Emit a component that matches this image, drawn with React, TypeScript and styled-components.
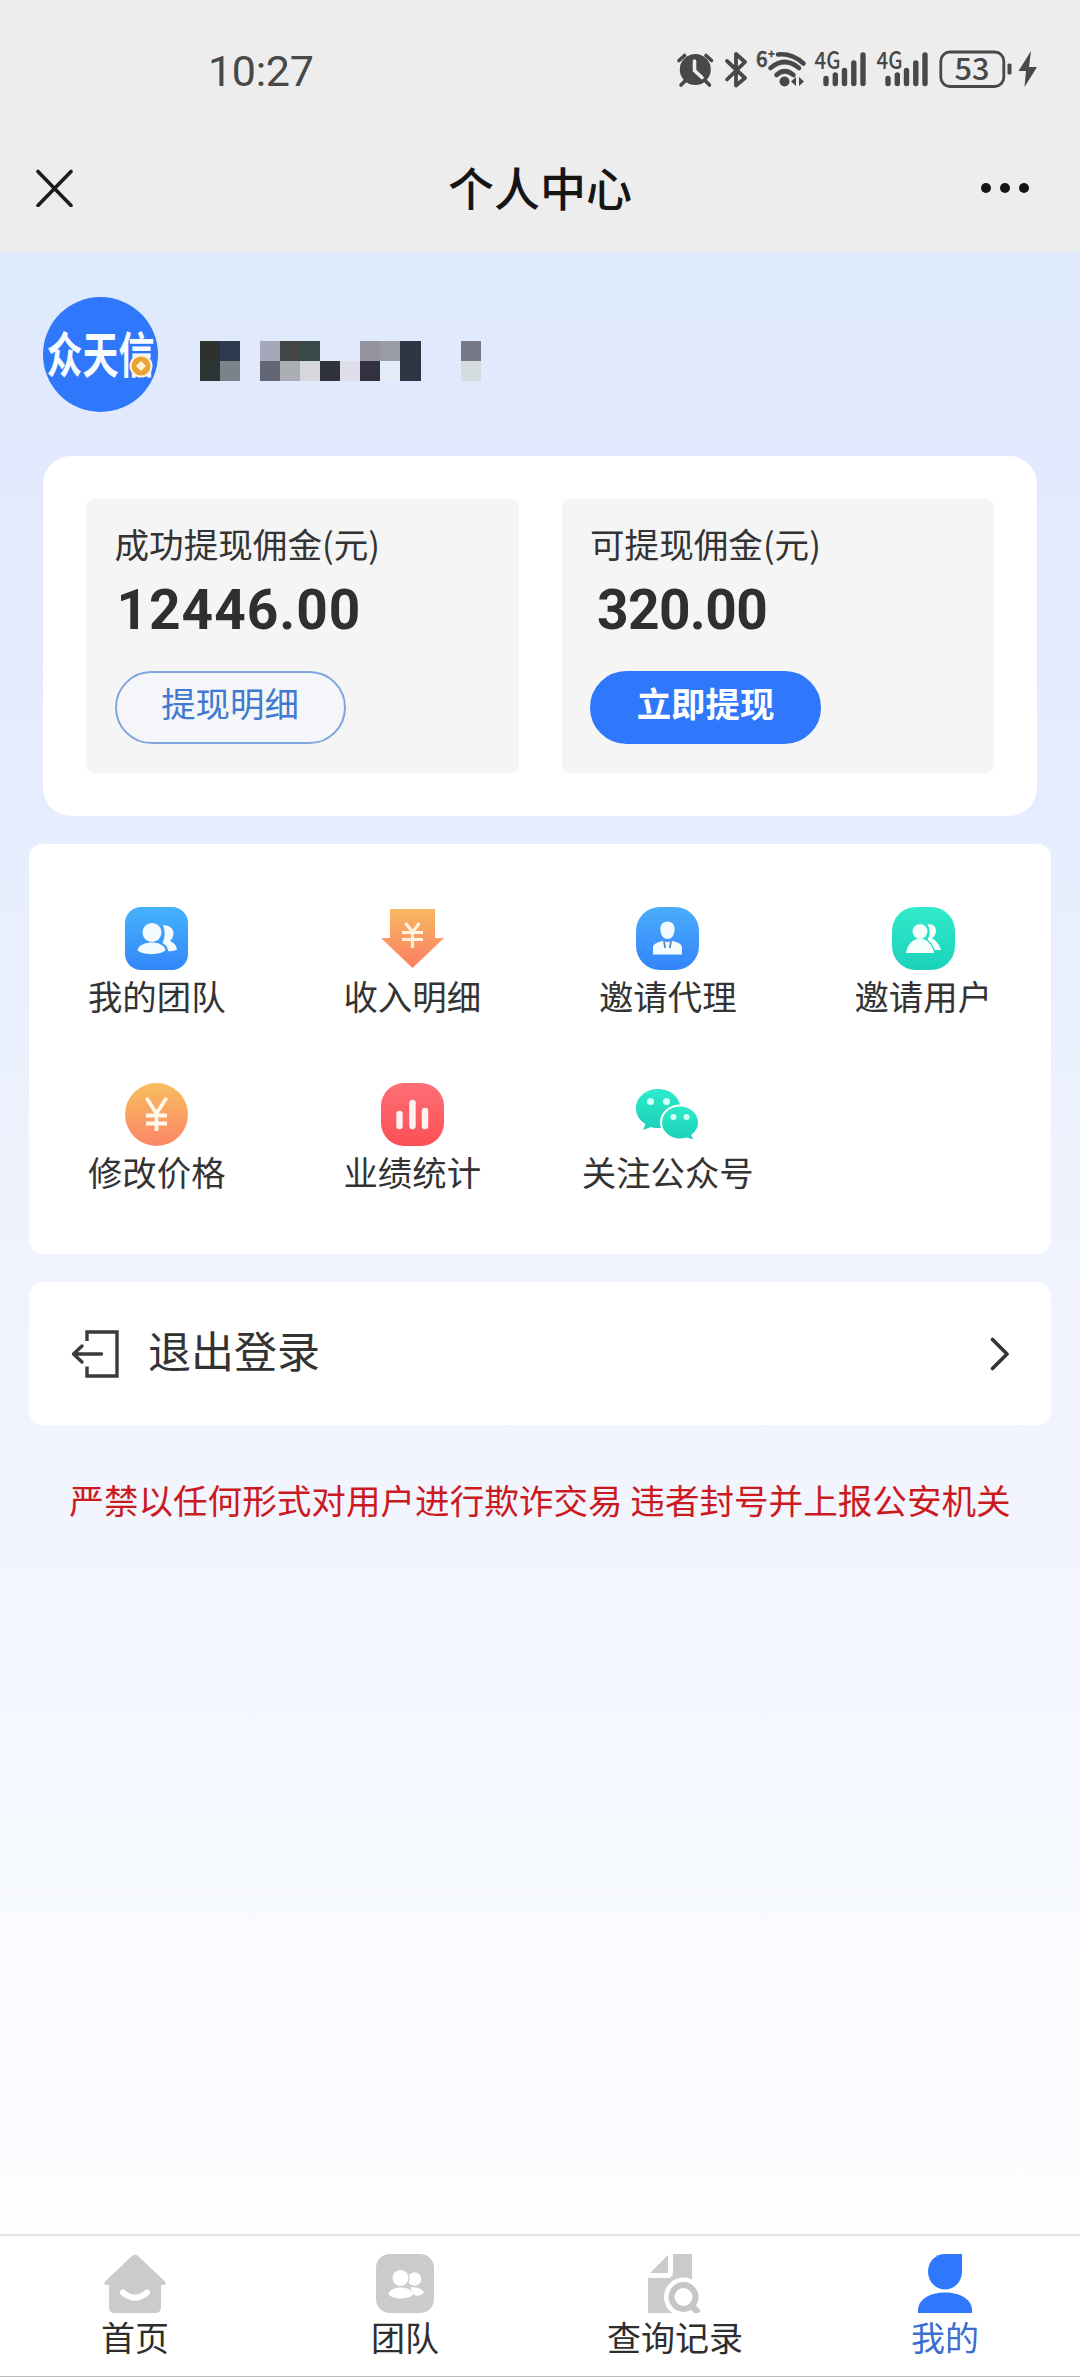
import React from "react";
import styled, { createGlobalStyle } from "styled-components";

const GlobalStyle = createGlobalStyle`
  * { box-sizing: border-box; }
  body {
    margin: 0;
    font-family: "Noto Sans CJK SC", "Noto Sans", sans-serif;
    color: #333;
  }
  svg { display: block; flex: none; }
`;

const Page = styled.div`
  width: 1080px;
  height: 2377px;
  display: flex;
  flex-direction: column;
  overflow: hidden;
  background: #fff;
`;

const StatusBar = styled.header`
  height: 123px;
  flex: none;
  display: flex;
  justify-content: space-between;
  padding: 36px 42px 0 208px;
  background: #ededed;
  color: #484848;
`;

const Clock = styled.time`
  height: 68px;
  line-height: 70px;
  font-family: Roboto, sans-serif;
  font-size: 43px;
  letter-spacing: -0.3px;
`;

const StatusIcons = styled.div`
  height: 68px;
  svg text { font-family: "Noto Sans CJK SC", sans-serif; font-weight: 500; }
`;

const NavBar = styled.nav`
  height: 130px;
  flex: none;
  display: grid;
  grid-template-columns: 60px 1fr 60px;
  align-items: center;
  padding: 0 45px 0 25px;
  background: #ededed;
  border-bottom: 3px solid #e8ecec;
`;

const NavTitle = styled.h1`
  margin: 0;
  padding-left: 20px;
  height: 130px;
  line-height: 126px;
  text-align: center;
  font-size: 46px;
  font-weight: 500;
  color: #151515;
`;

const NavButton = styled.button`
  display: flex;
  align-items: center;
  justify-content: center;
  height: 60px;
  padding: 0;
  border: 0;
  background: none;
`;

const Content = styled.main`
  flex: 1;
  display: flex;
  flex-direction: column;
  padding: 0 29px;
  background: linear-gradient(180deg, #dfeafc 0%, #e2e9fe 10%, #e6edfe 29%, #eff3fd 50%, #f2f4fe 62%, #f6f9ff 78%, #fdfdff 100%);
`;

const Profile = styled.section`
  height: 202px;
  flex: none;
  display: flex;
  align-items: center;
  gap: 42px;
  padding: 0 14px;
`;

const Avatar = styled.div`
  position: relative;
  width: 115px;
  height: 115px;
  border-radius: 50%;
  background: #2f77fb;
  display: flex;
  align-items: center;
  justify-content: center;
`;

const AvatarName = styled.span`
  font-size: 36px;
  font-weight: 700;
  line-height: 40px;
  white-space: nowrap;
  color: #f6fbff;
  transform: translateY(-3px) scaleY(1.36);
`;

const AvatarCoin = styled.svg`
  position: absolute;
  left: 86px;
  top: 57px;
`;

const MaskedName = styled.div`
  display: grid;
  grid-template-columns: repeat(14, 20.05px);
  grid-auto-rows: 20px;
  margin-top: 13px;
`;

const MaskCell = styled.span<{ $tone: string }>`
  background: ${(p) => p.$tone};
`;

const BalanceCard = styled.section`
  height: 360px;
  flex: none;
  display: grid;
  grid-template-columns: 1fr 1fr;
  gap: 43px;
  margin: 1px 14px 28px;
  padding: 43px;
  border-radius: 28px;
  background: #fff;
`;

const Balance = styled.div`
  display: flex;
  flex-direction: column;
  align-items: flex-start;
  padding: 23px 0 0 28.5px;
  border-radius: 8px;
  background: #f5f5f5;
`;

const BalanceLabel = styled.div`
  height: 46px;
  line-height: 42px;
  font-size: 34.6px;
`;

const Amount = styled.div<{ $indent: number; $tracking: number }>`
  height: 80px;
  line-height: 84px;
  padding-left: ${(p) => p.$indent}px;
  font-family: Roboto, sans-serif;
  font-size: 55px;
  font-weight: 700;
  letter-spacing: ${(p) => p.$tracking}px;
  color: #2f2f2f;
`;

const PillButton = styled.button<{ $solid?: boolean }>`
  width: 231px;
  height: 73px;
  margin-top: 23px;
  padding: 0 0 11px;
  border: 2px solid ${(p) => (p.$solid ? "#2f77fb" : "#7fa6dd")};
  border-radius: 37px;
  background: ${(p) => (p.$solid ? "#2f77fb" : "#f5f6f9")};
  color: ${(p) => (p.$solid ? "#fff" : "#4079d0")};
  font-family: inherit;
  font-size: 34.4px;
  font-weight: ${(p) => (p.$solid ? 700 : 400)};
  line-height: 48px;
`;

const MenuCard = styled.section`
  height: 410px;
  flex: none;
  display: grid;
  grid-template-columns: repeat(4, 1fr);
  grid-auto-rows: 176px;
  padding-top: 63px;
  border-radius: 14px;
  background: #fff;
`;

const MenuItem = styled.a`
  display: flex;
  flex-direction: column;
  align-items: center;
`;

const MenuLabel = styled.span`
  margin-top: 3px;
  line-height: 44px;
  font-size: 34.4px;
  white-space: nowrap;
`;

const LogoutRow = styled.a`
  height: 143px;
  flex: none;
  display: flex;
  align-items: center;
  margin-top: 28px;
  padding: 0 41px 0 42px;
  border-radius: 14px;
  background: #fff;
`;

const LogoutLabel = styled.span`
  flex: 1;
  padding: 0 0 10px 28px;
  line-height: 60px;
  font-size: 43px;
`;

const Warning = styled.p`
  margin: 49px 0 0;
  line-height: 50px;
  text-align: center;
  white-space: nowrap;
  font-size: 34.6px;
  color: #cb1a20;
`;

const TabBar = styled.footer`
  height: 143px;
  flex: none;
  display: grid;
  grid-template-columns: repeat(4, 1fr);
  border-top: 2px solid #e2e3e5;
  border-bottom: 1px solid #bdbdbd;
  background: #fff;
`;

const Tab = styled.a<{ $active?: boolean }>`
  display: flex;
  flex-direction: column;
  align-items: center;
  padding-top: 18px;
  color: ${(p) => (p.$active ? "#3a6fd0" : "#2e2e2e")};
`;

const TabLabel = styled.span`
  margin-top: 2px;
  font-size: 34px;
  line-height: 44px;
`;

const SignalBars = ({ x }: { x: number }) => (
  <g transform={`translate(${x} 0)`}>
    <text x="-1.500" y="33" fontSize="24" textLength="26" lengthAdjust="spacingAndGlyphs" stroke="none">4G</text>
    <g strokeWidth="5.4" strokeLinecap="round">
      <path d="M10 42.500v5M19.300 39v8.500M28.500 34.500v13M37.800 27v20.500M47 19v28.500" />
    </g>
  </g>
);

const StatusGlyphs = () => (
  <svg width="366" height="68" viewBox="0 0 366 68" fill="#484848" stroke="#484848">
    {/* alarm */}
    <circle cx="23.300" cy="33.500" r="15.500" stroke="none" />
    <path d="M7 24.500l5.500-5M39.500 24.500l-5.500-5M13 45l-4 4M33.500 45l4 4" strokeWidth="3.600" strokeLinecap="round" fill="none" />
    <path d="M22.500 25v9.500l7.500 7" stroke="#ededed" strokeWidth="3.600" fill="none" strokeLinecap="round" />
    {/* bluetooth */}
    <path d="M55 25l18 17-9 7.500V18l9 8-18 17.500" strokeWidth="3.800" fill="none" strokeLinecap="round" strokeLinejoin="round" />
    {/* wifi */}
    <text x="84" y="31" fontSize="22" textLength="18" lengthAdjust="spacingAndGlyphs" strokeWidth="0.600">6⁺</text>
    <g fill="none" strokeWidth="4.600" strokeLinecap="round">
      <path d="M106 18.500q14-1.500 25.500 9" />
      <path d="M98.500 32q14-12 28.500 0" />
      <path d="M104.500 39q8-7.500 17 0" />
    </g>
    <circle cx="112.500" cy="45.500" r="5" stroke="none" />
    <path d="M119 45.500l5-4.500v9zM132 45.500l-5-4.500v9z" stroke="none" />
    <SignalBars x={144} />
    <SignalBars x={206} />
    {/* battery */}
    <rect x="268.800" y="16" width="63" height="34.500" rx="9" fill="none" strokeWidth="2.800" />
    <text x="282.500" y="44" fontSize="30" textLength="35" lengthAdjust="spacingAndGlyphs" stroke="none">53</text>
    <rect x="335.500" y="27.500" width="4" height="11" rx="1.500" stroke="none" />
    <path d="M359 15l-12.500 20h7.500l-1.500 16L365 31h-8z" stroke="none" />
  </svg>
);

const Gradient = ({ id, from, to }: { id: string; from: string; to: string }) => (
  <linearGradient id={id} x1="0" y1="0" x2="0" y2="1">
    <stop offset="0" stopColor={from} />
    <stop offset="1" stopColor={to} />
  </linearGradient>
);

const IconSvg = ({ children }: { children: React.ReactNode }) => (
  <svg width="63" height="63" viewBox="0 0 63 63">{children}</svg>
);

const TeamIcon = () => (
  <IconSvg>
    <Gradient id="team" from="#45b2fb" to="#3287fa" />
    <rect width="63" height="63" rx="16" fill="url(#team)" />
    <g fill="#f4fbff">
      <path d="M38 18.500c6-1 10.500 3 10.500 8 0 3-1.500 5.500-3.500 7.500 4 1.500 6.500 4.500 7 8.500-3 1.500-6 2-9 1.500-.5-4-2-6-5.500-8 2.500-5 3-11 .5-17.500z" />
      <circle cx="27" cy="25.500" r="9.500" />
      <path d="M12.500 43c1-5 8-7.500 14.500-7.500s12.500 2.500 13.500 7.500c-4 5.500-24.500 5.500-28 0z" />
    </g>
  </IconSvg>
);

const IncomeIcon = () => (
  <IconSvg>
    <Gradient id="income" from="#f7b961" to="#fb7d63" />
    <path d="M9 2h45v29h9L31.500 61 0 31h9z" fill="url(#income)" />
    <path d="M24.500 16l7 9 7-9M31.500 24v17M21 25.500h21M21 32.500h21" fill="none" stroke="#fff3df" strokeWidth="3.200" />
  </IconSvg>
);

const AgentIcon = () => (
  <IconSvg>
    <Gradient id="agent" from="#4aadfb" to="#3384fa" />
    <rect width="63" height="63" rx="24" fill="url(#agent)" />
    <g fill="#f4fbff">
      <path d="M31.500 14.500c5 0 7.500 3.500 7 9-.4 5-3.300 8.500-7 8.500s-6.600-3.500-7-8.500c-.5-5.500 2-9 7-9z" />
      <path d="M17 47.500v-7c0-3.500 4-5 9.500-6.500l5 1 5-1c5.500 1.500 9.500 3 9.500 6.500v7z" />
    </g>
    <path d="M28 34l1.200 7M35 34l-1.200 7" stroke="#5d87bd" strokeWidth="1.800" />
  </IconSvg>
);

const UsersIcon = () => (
  <IconSvg>
    <Gradient id="users" from="#31ebcb" to="#1bd1bb" />
    <rect width="63" height="63" rx="24" fill="url(#users)" />
    <g fill="#f4fffc">
      <path d="M35.500 17.500c5-1.500 8.500 2 8.500 6.500 0 3.500-2 5.500-4 7.500 4 2 7.500 6 9 11.500h-6c-2.500-5.500-5-9-7.500-10.500 2.500-4 3.500-9 0-15z" />
      <circle cx="28" cy="24.500" r="7.500" />
      <path d="M14 46c1-7 5-12 10.500-14h7C37 34 41 39 42 46z" />
    </g>
  </IconSvg>
);

const PriceIcon = () => (
  <IconSvg>
    <Gradient id="price" from="#f8bd5f" to="#fc8666" />
    <circle cx="31.500" cy="31.500" r="31.500" fill="url(#price)" />
    <path d="M21.500 15l10 15.500L41.500 15M31.500 30v18M21 32.500h21M21 40.500h21" fill="none" stroke="#fff8eb" strokeWidth="3.800" />
  </IconSvg>
);

const StatsIcon = () => (
  <IconSvg>
    <Gradient id="stats" from="#fd7075" to="#fc4f55" />
    <rect width="63" height="63" rx="23" fill="url(#stats)" />
    <path d="M18.500 31v12M31.500 20v23M44 28v15" stroke="#fff2f2" strokeWidth="6.400" strokeLinecap="round" />
  </IconSvg>
);

const WechatIcon = () => (
  <IconSvg>
    <Gradient id="wechat" from="#2cebca" to="#1cd0b8" />
    <path d="M22 6c12.500 0 22.500 8.500 22.500 19.500S34.500 45 22 45c-2.500 0-5-.3-7-1l-8 3 2.500-6C3.500 37.500 0 32 0 25.500 0 14.500 9.500 6 22 6z" fill="url(#wechat)" />
    <path d="M44 22.500c10.500 0 19 7.500 19 17 0 5-2.500 9.500-6.500 12.500l2 6-7.500-2.500c-2 .7-4.500 1-7 1-10.500 0-19-7.500-19-17s8.500-17 19-17z" fill="url(#wechat)" stroke="#fff" strokeWidth="2" />
    <g fill="#d6fff5">
      <circle cx="14.500" cy="18.500" r="3.500" />
      <circle cx="30.500" cy="18.500" r="3.500" />
      <circle cx="37.500" cy="34" r="3" />
      <circle cx="50.500" cy="34" r="3" />
    </g>
  </IconSvg>
);

const HomeTabIcon = () => (
  <svg width="62" height="59" viewBox="0 0 62 59">
    <path d="M28 2q3-2.500 6 0l27 25.500q2 3.500-2 3.500h-2v22q0 6-6 6H11q-6 0-6-6V31H3q-4 0-2-3.500z" fill="#cbcbcc" />
    <path d="M19 38.500q12 10.500 24 0" fill="none" stroke="#fff" strokeWidth="6" strokeLinecap="round" />
  </svg>
);

const TeamTabIcon = () => (
  <svg width="58" height="59" viewBox="0 0 58 59">
    <rect width="58" height="59" rx="14" fill="#cdcacb" />
    <g fill="#fff">
      <circle cx="38.500" cy="25" r="6.800" />
      <path d="M34 33.500c7-1.500 13 2 14 5-3 3.500-7 4-10 2.500z" />
      <circle cx="24.500" cy="24" r="9.200" fill="#cdcacb" />
      <circle cx="24.500" cy="24" r="8" />
      <path d="M12.500 40c1-4.500 7-6.500 12-6.500S36.500 35.500 37.500 40c-4 6-21.500 6-25 0z" />
    </g>
  </svg>
);

const SearchTabIcon = () => (
  <svg width="54" height="59" viewBox="0 0 54 59">
    <path d="M20 1v18H2z" fill="#cbcbcb" />
    <path d="M25 0h19v59H0V24h19q6 0 6-6z" fill="#cbcbcb" />
    <circle cx="35.500" cy="43" r="19.500" fill="#fff" />
    <path d="M44 52l8 8" stroke="#fff" strokeWidth="10" />
    <circle cx="35.500" cy="43" r="12" fill="none" stroke="#c6c6c6" strokeWidth="6" />
    <path d="M43.500 51.500l7 7.500" stroke="#c6c6c6" strokeWidth="6.500" />
  </svg>
);

const MineTabIcon = () => (
  <svg width="54" height="59" viewBox="0 0 54 59" fill="#2f77fb">
    <path d="M27 0h17v17.500c0 10-7.500 18-17 18s-17-8-17-18S17.500 0 27 0z" />
    <path d="M0 59v-4c1-10 12-16.500 27-16.500S53 45 54 55v4z" />
  </svg>
);

const LogoutIcon = () => (
  <svg width="49" height="48" viewBox="0 0 49 48" fill="none" stroke="#3b3b3b" strokeWidth="3.400">
    <path d="M16 11V2h30v44H16V36.500" />
    <path d="M30.500 24H3M11 16l-8.500 8 8.500 8" strokeLinecap="round" strokeLinejoin="round" />
  </svg>
);

const CLEAR = "transparent";

const MASK_ROWS = [
  ["#2d322c", "#2f394d", CLEAR, "#a4a8b8", "#434547", "#374a48", CLEAR, CLEAR, "#9593a0", "#999ca3", "#303544", CLEAR, CLEAR, "#747985"],
  ["#2a3433", "#7c828a", CLEAR, "#656675", "#abadb5", "#d6d8dd", "#2f323a", "#dddeea", "#313142", "#e2ecf6", "#2e3442", "#e2e7f9", CLEAR, "#d4dcdd"],
];

const MENU = [
  { label: "我的团队", Icon: TeamIcon },
  { label: "收入明细", Icon: IncomeIcon },
  { label: "邀请代理", Icon: AgentIcon },
  { label: "邀请用户", Icon: UsersIcon },
  { label: "修改价格", Icon: PriceIcon },
  { label: "业绩统计", Icon: StatsIcon },
  { label: "关注公众号", Icon: WechatIcon },
];

const TABS = [
  { label: "首页", Icon: HomeTabIcon, active: false },
  { label: "团队", Icon: TeamTabIcon, active: false },
  { label: "查询记录", Icon: SearchTabIcon, active: false },
  { label: "我的", Icon: MineTabIcon, active: true },
];

export default function App() {
  return (
    <Page>
      <GlobalStyle />
      <StatusBar>
        <Clock>10:27</Clock>
        <StatusIcons>
          <StatusGlyphs />
        </StatusIcons>
      </StatusBar>
      <NavBar>
        <NavButton aria-label="关闭">
          <svg width="38" height="38" viewBox="0 0 38 38" stroke="#1c1c1c" strokeWidth="3.600" strokeLinecap="round">
            <path d="M2 2.500l33 34M35 2.500l-33 34" />
          </svg>
        </NavButton>
        <NavTitle>个人中心</NavTitle>
        <NavButton aria-label="更多">
          <svg width="50" height="12" viewBox="0 0 50 12" fill="#151515">
            <circle cx="6" cy="6" r="5" />
            <circle cx="25" cy="6" r="5" />
            <circle cx="44" cy="6" r="5" />
          </svg>
        </NavButton>
      </NavBar>

      <Content>
        <Profile>
          <Avatar>
            <AvatarName>众天信</AvatarName>
            <AvatarCoin width="24" height="24" viewBox="0 0 24 24">
              <circle cx="12" cy="12" r="10.500" fill="#e8a435" stroke="#fff3dc" strokeWidth="2" />
              <path d="M12 7l5 5-5 5-5-5z" fill="#fff2d6" />
            </AvatarCoin>
          </Avatar>
          <MaskedName>
            {MASK_ROWS.flat().map((tone, i) => (
              <MaskCell key={i} $tone={tone} />
            ))}
          </MaskedName>
        </Profile>

        <BalanceCard>
          <Balance>
            <BalanceLabel>成功提现佣金(元)</BalanceLabel>
            <Amount $indent={2} $tracking={1}>12446.00</Amount>
            <PillButton>提现明细</PillButton>
          </Balance>
          <Balance>
            <BalanceLabel>可提现佣金(元)</BalanceLabel>
            <Amount $indent={7} $tracking={-0.6}>320.00</Amount>
            <PillButton $solid>立即提现</PillButton>
          </Balance>
        </BalanceCard>

        <MenuCard>
          {MENU.map(({ label, Icon }) => (
            <MenuItem key={label}>
              <Icon />
              <MenuLabel>{label}</MenuLabel>
            </MenuItem>
          ))}
        </MenuCard>

        <LogoutRow>
          <LogoutIcon />
          <LogoutLabel>退出登录</LogoutLabel>
          <svg width="20" height="34" viewBox="0 0 20 34" fill="none" stroke="#333" strokeWidth="3.600" strokeLinecap="round" strokeLinejoin="round">
            <path d="M2.500 2.500L17 17 2.500 31.500" />
          </svg>
        </LogoutRow>

        <Warning>严禁以任何形式对用户进行欺诈交易 违者封号并上报公安机关</Warning>
      </Content>

      <TabBar>
        {TABS.map(({ label, Icon, active }) => (
          <Tab key={label} $active={active}>
            <Icon />
            <TabLabel>{label}</TabLabel>
          </Tab>
        ))}
      </TabBar>
    </Page>
  );
}
